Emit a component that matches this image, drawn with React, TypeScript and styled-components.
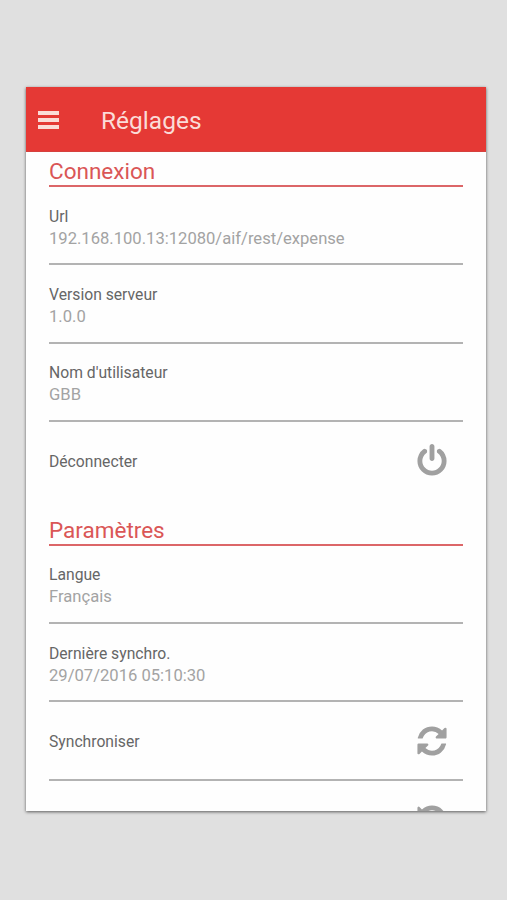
import React from "react";
import styled, { createGlobalStyle } from "styled-components";

const GlobalStyle = createGlobalStyle`
  * { box-sizing: border-box; }
  body {
    margin: 0;
    background: #e0e0e0;
    font-family: Roboto, "Liberation Sans", sans-serif;
  }
`;

const Page = styled.div`
  height: 900px;
  padding: 87px 21px 0 26px;
  background: #e0e0e0;
`;

const Screen = styled.main`
  height: 724px;
  display: flex;
  flex-direction: column;
  overflow: hidden;
  background: #fefefe;
  box-shadow: 0 1px 3px rgba(0, 0, 0, 0.6);
`;

const Toolbar = styled.header`
  flex: none;
  height: 65px;
  display: flex;
  align-items: center;
  padding: 2px 0 0 12px;
  background: #e53935;
  border-bottom: 1px solid #d5413e;
`;

const MenuButton = styled.button`
  width: 21px;
  height: 18px;
  margin: 0 42px 0 0;
  padding: 0;
  display: flex;
  flex-direction: column;
  justify-content: space-between;
  border: 0;
  background: none;
`;

const MenuBar = styled.span`
  display: block;
  width: 21px;
  height: 4px;
  background: #fbdcd8;
`;

const Title = styled.h1`
  margin: 1px 0 0;
  font-size: 24.5px;
  line-height: 30px;
  font-weight: 400;
  color: #fbdcd8;
`;

const Section = styled.section`
  flex: none;
  padding: 0 23px;
`;

const SectionTitle = styled.h2<{ $height: number }>`
  height: ${(p) => p.$height}px;
  margin: 0;
  display: flex;
  align-items: flex-end;
  font-size: 22.5px;
  line-height: 28px;
  font-weight: 400;
  color: #da5656;
  border-bottom: 2px solid #dc6668;
`;

const Row = styled.div<{ $last?: boolean }>`
  height: 78.4px;
  display: flex;
  align-items: center;
  justify-content: space-between;
  padding-right: 14px;
  border-bottom: ${(p) => (p.$last ? "0" : "2px solid #b3b3b3")};
`;

const Texts = styled.div<{ $pair: boolean }>`
  padding-top: ${(p) => (p.$pair ? 5 : 2)}px;
`;

const Label = styled.div`
  font-size: 15.7px;
  line-height: 22px;
  color: #666;
`;

const Value = styled.div`
  font-size: 16.6px;
  line-height: 22px;
  color: #a3a3a3;
`;

const Icon = styled.svg`
  width: 34px;
  height: 34px;
  flex: none;
  fill: #a0a0a0;
`;

const paths = {
  power:
    "M1664 896q0 156-61 298t-164 245-245 164-298 61-298-61-245-164-164-245-61-298q0-182 80.5-343t226.5-270q43-32 95.5-25t83.5 50q32 42 24.5 94.5t-49.5 84.5q-98 74-151.5 181t-53.5 228q0 104 40.5 198.5t109.5 163.5 163.5 109.5 198.5 40.5 198.5-40.5 163.5-109.5 109.5-163.5 40.5-198.5q0-121-53.5-228t-151.5-181q-42-32-49.5-84.5t24.5-94.5q31-43 84-50t95 25q146 109 226.5 270t80.5 343zm-640-768v640q0 52-38 90t-90 38-90-38-38-90v-640q0-52 38-90t90-38 90 38 38 90z",
  refresh:
    "M1639 1056q0 5-1 7-64 268-268 434.5t-478 166.5q-146 0-282.5-55t-243.5-157l-129 129q-19 19-45 19t-45-19-19-45v-448q0-26 19-45t45-19h448q26 0 45 19t19 45-19 45l-137 137q71 66 161 102t187 36q134 0 250-65t186-179q11-17 53-117 8-23 30-23h192q13 0 22.5 9.5t9.5 22.5zm25-800v448q0 26-19 45t-45 19h-448q-26 0-45-19t-19-45 19-45l138-138q-148-137-349-137-134 0-250 65t-186 179q-11 17-53 117-8 23-30 23h-199q-13 0-22.5-9.5t-9.5-22.5v-7q65-268 270-434.5t480-166.5q146 0 284 55.5t245 156.5l130-129q19-19 45-19t45 19 19 45z",
  undo:
    "M1664 896q0 156-61 298t-164 245-245 164-298 61q-172 0-327-72.5t-264-204.5q-7-10-6.5-22.5t8.5-20.5l137-138q10-9 25-9 16 2 23 12 73 95 179 147t225 52q104 0 198.5-40.5t163.5-109.5 109.5-163.5 40.5-198.5-40.5-198.5-109.5-163.5-163.5-109.5-198.5-40.5q-98 0-188 35.5t-160 101.5l137 138q31 30 14 69-17 40-59 40h-448q-26 0-45-19t-19-45v-448q0-42 40-59 39-17 69 14l130 129q107-101 244.5-156.5t284.5-55.5q156 0 298 61t245 164 164 245 61 298z",
};

type SettingProps = {
  label?: string;
  value?: string;
  icon?: keyof typeof paths;
  last?: boolean;
};

function Setting({ label, value, icon, last }: SettingProps) {
  return (
    <Row $last={last}>
      <Texts $pair={Boolean(value)}>
        {label && <Label>{label}</Label>}
        {value && <Value>{value}</Value>}
      </Texts>
      {icon && (
        <Icon viewBox="0 0 1792 1792" aria-hidden="true">
          <path d={paths[icon]} />
        </Icon>
      )}
    </Row>
  );
}

export default function App() {
  return (
    <>
      <GlobalStyle />
      <Page>
        <Screen>
          <Toolbar>
            <MenuButton aria-label="Menu">
              <MenuBar />
              <MenuBar />
              <MenuBar />
            </MenuButton>
            <Title>Réglages</Title>
          </Toolbar>
          <Section>
            <SectionTitle $height={35}>Connexion</SectionTitle>
            <Setting label="Url" value="192.168.100.13:12080/aif/rest/expense" />
            <Setting label="Version serveur" value="1.0.0" />
            <Setting label="Nom d'utilisateur" value="GBB" />
            <Setting label="Déconnecter" icon="power" last />
          </Section>
          <Section>
            <SectionTitle $height={45}>Paramètres</SectionTitle>
            <Setting label="Langue" value="Français" />
            <Setting label="Dernière synchro." value="29/07/2016 05:10:30" />
            <Setting label="Synchroniser" icon="refresh" />
            <Setting icon="undo" last />
          </Section>
        </Screen>
      </Page>
    </>
  );
}
